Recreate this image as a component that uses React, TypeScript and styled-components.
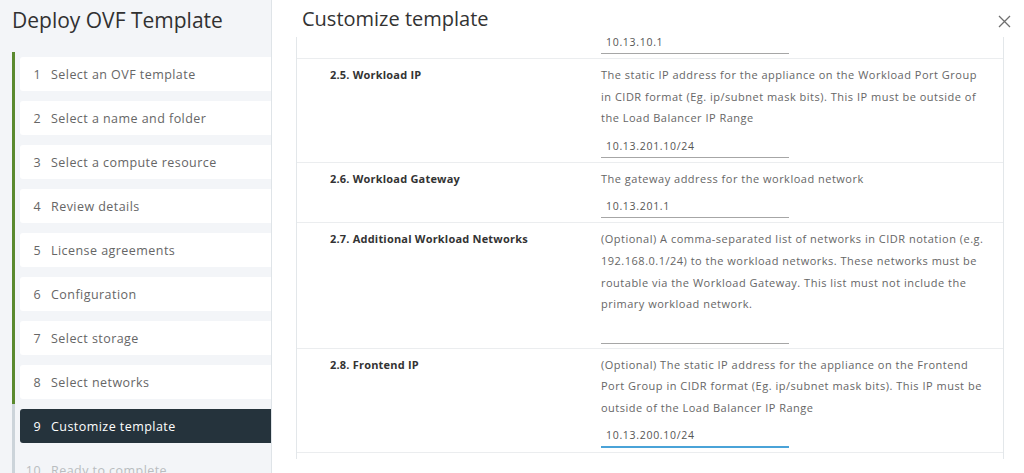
import React from "react";
import styled, { createGlobalStyle } from "styled-components";

const GlobalStyle = createGlobalStyle`
  html, body, #root {
    margin: 0;
    height: 100%;
    overflow: hidden;
  }
  body {
    font-family: "Open Sans", "Liberation Sans", sans-serif;
    background: #ffffff;
  }
`;

const Shell = styled.div`
  display: flex;
  height: 100%;
`;

const Sidebar = styled.aside`
  width: 271px;
  flex-shrink: 0;
  background: #f3f5f8;
  border-right: 1px solid #dfe4e8;
  overflow: hidden;
`;

const WizardTitle = styled.h1`
  margin: 0;
  padding: 0 0 0 12px;
  height: 52px;
  line-height: 40px;
  font-size: 21px;
  font-weight: 400;
  color: #313131;
`;

const StepList = styled.ol`
  list-style: none;
  margin: 0;
  padding: 0 0 0 12px;
`;

const StepItem = styled.li<{ $done: boolean }>`
  border-left: 3px solid ${(p) => (p.$done ? "#5b8a2f" : "#ccd4da")};
  padding: 5px 0 5px 5px;
`;

const StepBox = styled.div<{ $active: boolean; $disabled: boolean }>`
  display: flex;
  align-items: center;
  height: 34px;
  border-radius: 3px 0 0 3px;
  background: ${(p) => (p.$active ? "#25333c" : p.$disabled ? "transparent" : "#ffffff")};
  color: ${(p) => (p.$active ? "#ffffff" : p.$disabled ? "#b9bdc0" : "#666666")};
  font-size: 12.5px;
  letter-spacing: 0.45px;
`;

const StepNum = styled.span`
  width: 21px;
  text-align: right;
  margin-right: 10px;
`;

const Main = styled.main`
  flex: 1;
  display: flex;
  flex-direction: column;
  min-width: 0;
`;

const Header = styled.div`
  display: flex;
  align-items: center;
  justify-content: space-between;
  height: 37px;
  padding: 0 12px 0 30px;
  box-sizing: border-box;
`;

const PageTitle = styled.h2`
  margin: 0;
  font-size: 20px;
  font-weight: 400;
  color: #333333;
  line-height: 34px;
`;

const CloseButton = styled.button`
  border: none;
  background: none;
  padding: 0;
  width: 16px;
  height: 16px;
  display: flex;
  align-items: center;
  justify-content: center;
  margin-top: 6px;
  cursor: pointer;
`;

const Body = styled.div`
  margin: 0 20px 0 24px;
  height: 422px;
  border-left: 1px solid #e3e7ea;
  border-right: 1px solid #e3e7ea;
  overflow: hidden;
`;

const Row = styled.div<{ $tail?: boolean }>`
  display: grid;
  grid-template-columns: 304px 1fr;
  border-bottom: 1px solid #ebedef;
  padding: ${(p) => (p.$tail ? "0 0 4px" : "5px 0 4px")};
`;

const FieldLabel = styled.div`
  padding-left: 33px;
  font-size: 11px;
  font-weight: 700;
  color: #333333;
  line-height: 21.6px;
  letter-spacing: 0.2px;
`;

const FieldBody = styled.div`
  display: flex;
  flex-direction: column;
  gap: 6px;
  max-width: 386px;
`;

const Description = styled.div`
  font-size: 11px;
  line-height: 21.6px;
  color: #666666;
  letter-spacing: 0.5px;
`;

const TextInput = styled.input<{ $focused?: boolean; $tail?: boolean }>`
  width: 183px;
  height: ${(p) => (p.$tail ? "10px" : p.$focused ? "21px" : "22px")};
  box-sizing: content-box;
  padding: ${(p) => (p.$tail ? "0 0 6px 5px" : "0 0 0 5px")};
  margin: 0;
  border: none;
  border-bottom: ${(p) => (p.$focused ? "2px solid #4aa3d8" : "1px solid #a6a6a6")};
  outline: none;
  background: transparent;
  font-family: inherit;
  font-size: 10.5px;
  letter-spacing: 0.7px;
  color: #555555;
  caret-color: #222;
`;

type Field = {
  id: string;
  label: string;
  desc: string;
  value: string;
  focused?: boolean;
};

const fields: Field[] = [
  {
    id: "2.5",
    label: "2.5. Workload IP",
    desc: "The static IP address for the appliance on the Workload Port Group in CIDR format (Eg. ip/subnet mask bits). This IP must be outside of the Load Balancer IP Range",
    value: "10.13.201.10/24",
  },
  {
    id: "2.6",
    label: "2.6. Workload Gateway",
    desc: "The gateway address for the workload network",
    value: "10.13.201.1",
  },
  {
    id: "2.7",
    label: "2.7. Additional Workload Networks",
    desc: "(Optional) A comma-separated list of networks in CIDR notation (e.g. 192.168.0.1/24) to the workload networks. These networks must be routable via the Workload Gateway. This list must not include the primary workload network.",
    value: "",
  },
  {
    id: "2.8",
    label: "2.8. Frontend IP",
    desc: "(Optional) The static IP address for the appliance on the Frontend Port Group in CIDR format (Eg. ip/subnet mask bits). This IP must be outside of the Load Balancer IP Range",
    value: "10.13.200.10/24",
    focused: true,
  },
];

const steps = [
  "Select an OVF template",
  "Select a name and folder",
  "Select a compute resource",
  "Review details",
  "License agreements",
  "Configuration",
  "Select storage",
  "Select networks",
  "Customize template",
  "Ready to complete",
];

const CURRENT = 9;

const CloseIcon = () => (
  <svg width="13" height="13" viewBox="0 0 13 13">
    <path d="M1 1 L12 12 M12 1 L1 12" stroke="#6f6f6f" strokeWidth="1.3" fill="none" />
  </svg>
);

export default function App() {
  return (
    <>
      <GlobalStyle />
      <Shell>
        <Sidebar>
          <WizardTitle>Deploy OVF Template</WizardTitle>
          <StepList>
            {steps.map((s, i) => {
              const n = i + 1;
              return (
                <StepItem key={s} $done={n < CURRENT}>
                  <StepBox $active={n === CURRENT} $disabled={n > CURRENT}>
                    <StepNum>{n}</StepNum>
                    {s}
                  </StepBox>
                </StepItem>
              );
            })}
          </StepList>
        </Sidebar>
        <Main>
          <Header>
            <PageTitle>Customize template</PageTitle>
            <CloseButton aria-label="Close">
              <CloseIcon />
            </CloseButton>
          </Header>
          <Body>
            {/* bottom of 2.4 Management Gateway, the rest is scrolled away */}
            <Row $tail>
              <div />
              <FieldBody>
                <TextInput defaultValue="10.13.10.1" $tail />
              </FieldBody>
            </Row>
            {fields.map((f) => (
              <Row key={f.id}>
                <FieldLabel>{f.label}</FieldLabel>
                <FieldBody>
                  <Description>{f.desc}</Description>
                  <TextInput
                    defaultValue={f.value}
                    $focused={f.focused}
                    autoFocus={f.focused}
                  />
                </FieldBody>
              </Row>
            ))}
          </Body>
        </Main>
      </Shell>
    </>
  );
}
